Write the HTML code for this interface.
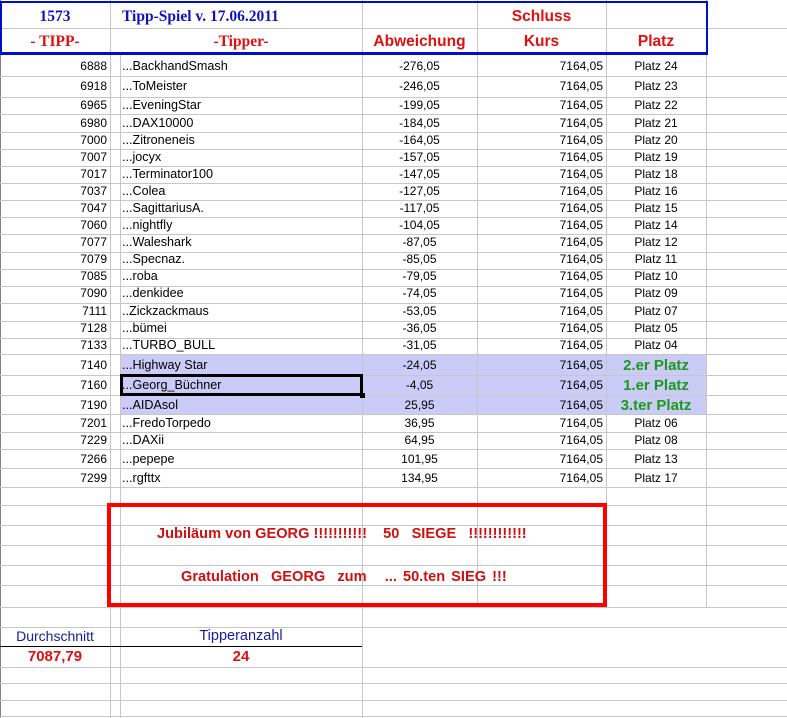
<!DOCTYPE html>
<html><head><meta charset="utf-8"><style>
*{margin:0;padding:0;box-sizing:border-box}
body{width:787px;height:718px;background:#fff;position:relative;overflow:hidden;font-family:"Liberation Sans",Arial,sans-serif;font-size:12px;color:#000}
.h{position:absolute;left:0;width:787px;height:1px;background:#c6c6c6}
.v{position:absolute;top:0;width:1px;height:718px;background:#c6c6c6}
.r{position:absolute;left:0;width:787px}
.r span{position:absolute;top:0;white-space:nowrap}
.a{left:0;width:107px;text-align:right}
.b{left:122px;font-size:12.6px}
.c{left:362px;width:115px;text-align:center}
.d{left:477px;width:126px;text-align:right}
.e{left:606px;width:100px;text-align:center}
.g{color:#1a9a1a;font-weight:bold;font-size:15px}
.t{position:absolute;white-space:nowrap}
</style></head><body>
<div style="position:absolute;left:120px;top:354px;width:586px;height:60px;background:#cbcbf7"></div>
<div class="v" style="left:0;background:#808080"></div>
<div class="v" style="left:110px"></div>
<div class="v" style="left:120px;top:54px;height:664px"></div>
<div class="v" style="left:362px"></div>
<div class="v" style="left:477px;height:607px"></div>
<div class="v" style="left:606px;height:607px"></div>
<div class="v" style="left:706px;height:607px"></div>
<div class="h" style="top:28px"></div>
<div class="h" style="top:76px"></div><div class="h" style="top:97px"></div><div class="h" style="top:114px"></div><div class="h" style="top:132px"></div><div class="h" style="top:149px"></div><div class="h" style="top:166px"></div><div class="h" style="top:183px"></div><div class="h" style="top:200px"></div><div class="h" style="top:217px"></div><div class="h" style="top:234px"></div><div class="h" style="top:252px"></div><div class="h" style="top:269px"></div><div class="h" style="top:286px"></div><div class="h" style="top:303px"></div><div class="h" style="top:321px"></div><div class="h" style="top:338px"></div><div class="h" style="top:354px"></div><div class="h" style="top:375px"></div><div class="h" style="top:395px"></div><div class="h" style="top:414px"></div><div class="h" style="top:432px"></div><div class="h" style="top:449px"></div><div class="h" style="top:468px"></div><div class="h" style="top:487px"></div><div class="h" style="top:505px"></div><div class="h" style="top:525px"></div><div class="h" style="top:545px"></div><div class="h" style="top:565px"></div><div class="h" style="top:585px"></div><div class="h" style="top:607px"></div><div class="h" style="top:627px"></div><div class="h" style="top:667px"></div><div class="h" style="top:683px"></div><div class="h" style="top:700px"></div><div class="h" style="top:716px"></div>
<div style="position:absolute;left:0;top:646px;width:362px;height:1px;background:#000"></div>
<div style="position:absolute;left:0;top:1px;width:708px;height:54px;border:2px solid #0010c8;border-bottom-width:3px"></div>
<div class="t" style="left:0;top:8px;width:110px;text-align:center;font-family:'Liberation Serif',serif;font-weight:bold;font-size:15.5px;color:#1010c0">1573</div>
<div class="t" style="left:122px;top:8px;font-family:'Liberation Serif',serif;font-weight:bold;font-size:15.5px;color:#1010c0">Tipp-Spiel v. 17.06.2011</div>
<div class="t" style="left:477px;top:8px;width:129px;text-align:center;font-weight:bold;font-size:15.5px;color:#e01010">Schluss</div>
<div class="t" style="left:0;top:33px;width:110px;text-align:center;font-family:'Liberation Serif',serif;font-weight:bold;font-size:15.5px;color:#e01010">- TIPP-</div>
<div class="t" style="left:120px;top:33px;width:242px;text-align:center;font-family:'Liberation Serif',serif;font-weight:bold;font-size:15.5px;color:#e01010">-Tipper-</div>
<div class="t" style="left:362px;top:33px;width:115px;text-align:center;font-weight:bold;font-size:15.5px;color:#e01010">Abweichung</div>
<div class="t" style="left:477px;top:33px;width:129px;text-align:center;font-weight:bold;font-size:15.5px;color:#e01010">Kurs</div>
<div class="t" style="left:606px;top:33px;width:100px;text-align:center;font-weight:bold;font-size:15.5px;color:#e01010">Platz</div>
<div class="r" style="top:59px"><span class="a">6888</span><span class="b">...BackhandSmash</span><span class="c">-276,05</span><span class="d">7164,05</span><span class="e">Platz 24</span></div>
<div class="r" style="top:79px"><span class="a">6918</span><span class="b">...ToMeister</span><span class="c">-246,05</span><span class="d">7164,05</span><span class="e">Platz 23</span></div>
<div class="r" style="top:98px"><span class="a">6965</span><span class="b">...EveningStar</span><span class="c">-199,05</span><span class="d">7164,05</span><span class="e">Platz 22</span></div>
<div class="r" style="top:116px"><span class="a">6980</span><span class="b">...DAX10000</span><span class="c">-184,05</span><span class="d">7164,05</span><span class="e">Platz 21</span></div>
<div class="r" style="top:133px"><span class="a">7000</span><span class="b">...Zitroneneis</span><span class="c">-164,05</span><span class="d">7164,05</span><span class="e">Platz 20</span></div>
<div class="r" style="top:150px"><span class="a">7007</span><span class="b">...jocyx</span><span class="c">-157,05</span><span class="d">7164,05</span><span class="e">Platz 19</span></div>
<div class="r" style="top:167px"><span class="a">7017</span><span class="b">...Terminator100</span><span class="c">-147,05</span><span class="d">7164,05</span><span class="e">Platz 18</span></div>
<div class="r" style="top:184px"><span class="a">7037</span><span class="b">...Colea</span><span class="c">-127,05</span><span class="d">7164,05</span><span class="e">Platz 16</span></div>
<div class="r" style="top:201px"><span class="a">7047</span><span class="b">...SagittariusA.</span><span class="c">-117,05</span><span class="d">7164,05</span><span class="e">Platz 15</span></div>
<div class="r" style="top:218px"><span class="a">7060</span><span class="b">...nightfly</span><span class="c">-104,05</span><span class="d">7164,05</span><span class="e">Platz 14</span></div>
<div class="r" style="top:235px"><span class="a">7077</span><span class="b">...Waleshark</span><span class="c">-87,05</span><span class="d">7164,05</span><span class="e">Platz 12</span></div>
<div class="r" style="top:252px"><span class="a">7079</span><span class="b">...Specnaz.</span><span class="c">-85,05</span><span class="d">7164,05</span><span class="e">Platz 11</span></div>
<div class="r" style="top:269px"><span class="a">7085</span><span class="b">...roba</span><span class="c">-79,05</span><span class="d">7164,05</span><span class="e">Platz 10</span></div>
<div class="r" style="top:286px"><span class="a">7090</span><span class="b">...denkidee</span><span class="c">-74,05</span><span class="d">7164,05</span><span class="e">Platz 09</span></div>
<div class="r" style="top:304px"><span class="a">7111</span><span class="b">..Zickzackmaus</span><span class="c">-53,05</span><span class="d">7164,05</span><span class="e">Platz 07</span></div>
<div class="r" style="top:321px"><span class="a">7128</span><span class="b">...bümei</span><span class="c">-36,05</span><span class="d">7164,05</span><span class="e">Platz 05</span></div>
<div class="r" style="top:338px"><span class="a">7133</span><span class="b">...TURBO_BULL</span><span class="c">-31,05</span><span class="d">7164,05</span><span class="e">Platz 04</span></div>
<div class="r" style="top:358px"><span class="a">7140</span><span class="b">...Highway Star</span><span class="c">-24,05</span><span class="d">7164,05</span><span class="e g" style="top:-1px">2.er Platz</span></div>
<div class="r" style="top:378px"><span class="a">7160</span><span class="b">...Georg_Büchner</span><span class="c">-4,05</span><span class="d">7164,05</span><span class="e g" style="top:-1px">1.er Platz</span></div>
<div class="r" style="top:398px"><span class="a">7190</span><span class="b">...AIDAsol</span><span class="c">25,95</span><span class="d">7164,05</span><span class="e g" style="top:-1px">3.ter Platz</span></div>
<div class="r" style="top:416px"><span class="a">7201</span><span class="b">...FredoTorpedo</span><span class="c">36,95</span><span class="d">7164,05</span><span class="e">Platz 06</span></div>
<div class="r" style="top:433px"><span class="a">7229</span><span class="b">...DAXii</span><span class="c">64,95</span><span class="d">7164,05</span><span class="e">Platz 08</span></div>
<div class="r" style="top:452px"><span class="a">7266</span><span class="b">...pepepe</span><span class="c">101,95</span><span class="d">7164,05</span><span class="e">Platz 13</span></div>
<div class="r" style="top:471px"><span class="a">7299</span><span class="b">...rgfttx</span><span class="c">134,95</span><span class="d">7164,05</span><span class="e">Platz 17</span></div>
<div style="position:absolute;left:120px;top:374px;width:243px;height:22px;border:3px solid #000"></div>
<div style="position:absolute;left:360px;top:393px;width:5px;height:5px;background:#000"></div>
<div style="position:absolute;left:107px;top:503px;width:500px;height:104px;border:4px solid #f00"></div>
<div class="t" style="left:157px;top:526px;font-weight:bold;font-size:14.6px;color:#d01010">Jubiläum von GEORG !!!!!!!!!!!&nbsp;&nbsp;&nbsp; 50&nbsp;&nbsp; SIEGE&nbsp;&nbsp; !!!!!!!!!!!!</div>
<div class="t" style="left:181px;top:569px;font-weight:bold;font-size:14.6px;word-spacing:2px;color:#d01010">Gratulation&nbsp; GEORG&nbsp; zum&nbsp;&nbsp; ... 50.ten SIEG !!!</div>
<div class="t" style="left:0;top:628px;width:110px;text-align:center;font-size:14px;color:#1a1aa0">Durchschnitt</div>
<div class="t" style="left:120px;top:628px;width:242px;text-align:center;font-size:14.5px;color:#1a1aa0">Tipperanzahl</div>
<div class="t" style="left:0;top:648px;width:110px;text-align:center;font-weight:bold;font-size:15px;color:#e01010">7087,79</div>
<div class="t" style="left:120px;top:648px;width:242px;text-align:center;font-weight:bold;font-size:15px;color:#e01010">24</div>
</body></html>
